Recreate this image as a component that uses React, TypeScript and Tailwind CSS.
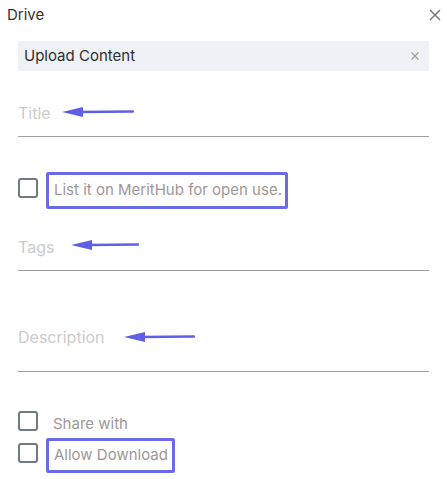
import React from "react";

function Arrow({ left, top, width }: { left: number; top: number; width: number }) {
  return (
    <svg
      className="absolute"
      style={{ left, top }}
      width={width}
      height={12}
      viewBox={`0 0 ${width} 12`}
    >
      <line x1={16} y1={6} x2={width - 1} y2={5.5} stroke="#5f5fe3" strokeWidth={2.5} strokeLinecap="round" />
      <polygon points={`0,6 21,1 21,11`} fill="#5f5fe3" />
    </svg>
  );
}

function Checkbox({ className = "" }: { className?: string }) {
  return <div className={`h-[20px] w-[20px] shrink-0 rounded-[3px] border-[2.5px] border-[#6e7a82] ${className}`} />;
}

function Field({
  label,
  padTop,
  padBottom,
  arrowLeft,
  arrowTop,
  arrowWidth,
}: {
  label: string;
  padTop: string;
  padBottom: string;
  arrowLeft: number;
  arrowTop: number;
  arrowWidth: number;
}) {
  return (
    <div className={`mx-[18px] border-b border-[#9e9e9e] ${padTop} ${padBottom}`}>
      <div className="relative text-[16px] leading-[20px] text-[#cccccc]">
        {label}
        <Arrow left={arrowLeft} top={arrowTop} width={arrowWidth} />
      </div>
    </div>
  );
}

export default function App() {
  return (
    <div className="h-[479px] w-[447px] overflow-hidden bg-white font-['Inter',sans-serif]">
      <div className="flex h-[30px] items-center justify-between pl-[7px] pr-[6px]">
        <span className="text-[15px] text-[#333]">Drive</span>
        <svg width="12" height="12" viewBox="0 0 12 12">
          <path d="M1 1 L11 11 M11 1 L1 11" stroke="#6f7378" strokeWidth="1.4" />
        </svg>
      </div>

      <div className="mx-[18px] mt-[11px] flex h-[30px] items-center justify-between bg-[#eef2f7] pl-[6px] pr-[10px]">
        <span className="text-[15px] text-[#2f2f2f]">Upload Content</span>
        <svg width="8" height="8" viewBox="0 0 8 8">
          <path d="M0.5 0.5 L7.5 7.5 M7.5 0.5 L0.5 7.5" stroke="#9a9a9a" strokeWidth="1.1" />
        </svg>
      </div>

      <Field label="Title" padTop="pt-[32px]" padBottom="pb-[13px]" arrowLeft={44} arrowTop={3} arrowWidth={72} />

      <div className="mx-[18px] mt-[35px] flex h-[37px] items-start">
        <Checkbox className="mt-[6px]" />
        <div className="ml-[8px] flex h-[37px] w-[242px] items-center rounded-[2px] border-[3px] border-[#6b6be8] pl-[5px] text-[15px] text-[#9d9896]">
          List it on MeritHub for open use.
        </div>
      </div>

      <Field label="Tags" padTop="pt-[28px]" padBottom="pb-[13px]" arrowLeft={53} arrowTop={2} arrowWidth={68} />

      <Field label="Description" padTop="pt-[56px]" padBottom="pb-[24px]" arrowLeft={106} arrowTop={4} arrowWidth={71} />

      <div className="mx-[18px] mt-[39px] flex items-start">
        <Checkbox />
        <span className="ml-[15px] mt-[3px] text-[15px] leading-[20px] text-[#9d9896]">Share with</span>
      </div>

      <div className="mx-[18px] mt-[4px] flex h-[35px] items-start">
        <Checkbox className="mt-[5px]" />
        <div className="ml-[8px] flex h-[35px] w-[129px] items-center rounded-[2px] border-[3px] border-[#6b6be8] pl-[5px] text-[15px] text-[#9d9896]">
          Allow Download
        </div>
      </div>
    </div>
  );
}
